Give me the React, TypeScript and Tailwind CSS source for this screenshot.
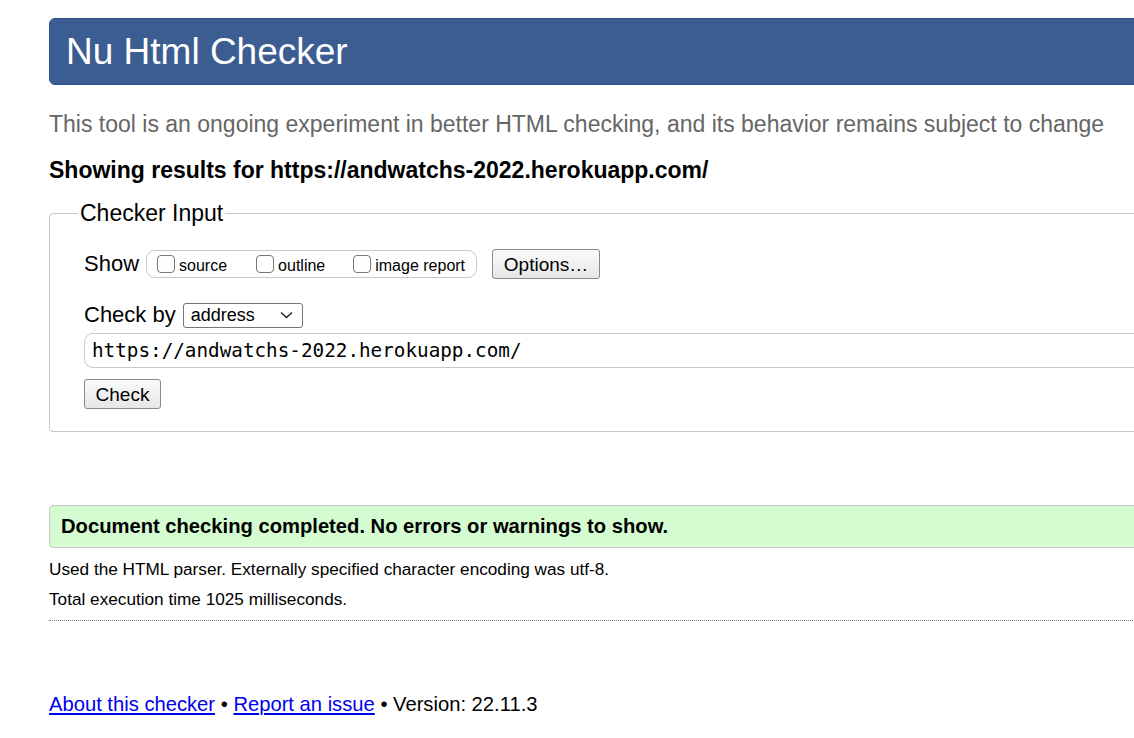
export default function App() {
  return (
    <div className="h-[738px] w-[1134px] overflow-hidden bg-white pl-[49px] pt-[18px] font-['Liberation_Sans',Arial,sans-serif] text-black">
      <div className="w-[1200px]">
        <header className="flex h-[67px] items-center rounded-[6px] border border-[#2e5090] bg-[#3c5d91] pl-[16px]">
          <h1 className="text-[37px] leading-none text-white">Nu Html Checker</h1>
        </header>

        <p className="mt-[26px] text-[23px] leading-[26px] text-[#666]">
          This tool is an ongoing experiment in better HTML checking, and its behavior remains subject to change
        </p>

        <p className="mt-[21px] text-[23px] font-bold leading-[24px]">
          Showing results for https://andwatchs-2022.herokuapp.com/
        </p>

        <fieldset className="mt-[19px] rounded-[4px] border border-[#c8c8c8] pb-[22px] pl-[28px]">
          <legend className="px-[2px] text-[23px] leading-[24px]">Checker Input</legend>

          <div className="pl-[6px]">
            <div className="mt-[24px] flex items-center">
              <span className="text-[22px] leading-[26px]">Show</span>
              <div className="ml-[7px] flex h-[28px] w-[331px] items-center rounded-[9px] border border-[#c8c8c8] pl-[10px] text-[16px]">
                <label className="flex items-center">
                  <input type="checkbox" className="h-[18px] w-[18px] appearance-none rounded-[4px] border border-[#777] bg-white" />
                  <span className="ml-[4px] mt-[3px]">source</span>
                </label>
                <label className="ml-[29px] flex items-center">
                  <input type="checkbox" className="h-[18px] w-[18px] appearance-none rounded-[4px] border border-[#777] bg-white" />
                  <span className="ml-[4px] mt-[3px]">outline</span>
                </label>
                <label className="ml-[28px] flex items-center">
                  <input type="checkbox" className="h-[18px] w-[18px] appearance-none rounded-[4px] border border-[#777] bg-white" />
                  <span className="ml-[4px] mt-[3px]">image report</span>
                </label>
              </div>
              <button className="ml-[15px] h-[30px] w-[108px] rounded-[3px] border border-[#8a8a8a] bg-gradient-to-b from-[#fbfbfb] to-[#e6e6e6] text-[19px] leading-none">
                Options…
              </button>
            </div>

            <div className="mt-[23px] flex items-center">
              <span className="text-[22px] leading-[26px]">Check by</span>
              <div className="ml-[7px] flex h-[25px] w-[120px] items-center justify-between rounded-[3px] border border-[#767676] bg-white pl-[7px] pr-[9px]">
                <span className="text-[18px] leading-none">address</span>
                <svg width="13" height="8" viewBox="0 0 13 8" fill="none">
                  <path d="M1 1.5 6.5 6.5 12 1.5" stroke="#222" strokeWidth="1.4" />
                </svg>
              </div>
            </div>

            <div className="mt-[5px] flex h-[35px] w-[1150px] items-center rounded-[9px] border border-[#c8c8c8] pl-[7px] font-['DejaVu_Sans_Mono',monospace] text-[19.3px] leading-none">
              https://andwatchs-2022.herokuapp.com/
            </div>

            <button className="mt-[11px] box-border h-[30px] w-[77px] rounded-[3px] border border-[#8a8a8a] bg-gradient-to-b from-[#fbfbfb] to-[#e6e6e6] text-[19px] leading-none">
              Check
            </button>
          </div>
        </fieldset>

        <div className="mt-[73px] flex h-[43px] items-center rounded-[4px] border border-[#c8c8c8] bg-[#d5fcd0] pl-[11px]">
          <p className="text-[20.2px] font-bold">Document checking completed. No errors or warnings to show.</p>
        </div>

        <p className="mt-[11px] text-[17.2px] leading-[20px]">
          Used the HTML parser. Externally specified character encoding was utf-8.
        </p>
        <p className="mt-[10px] text-[17.2px] leading-[20px]">Total execution time 1025 milliseconds.</p>

        <div className="mt-[11px] border-t border-dotted border-[#777]" />

        <p className="mt-[71px] text-[20.2px] leading-[24px]">
          <a href="#" className="text-[#0000ee] underline">About this checker</a>
          {" • "}
          <a href="#" className="text-[#0000ee] underline">Report an issue</a>
          {" • Version: 22.11.3"}
        </p>
      </div>
    </div>
  );
}
